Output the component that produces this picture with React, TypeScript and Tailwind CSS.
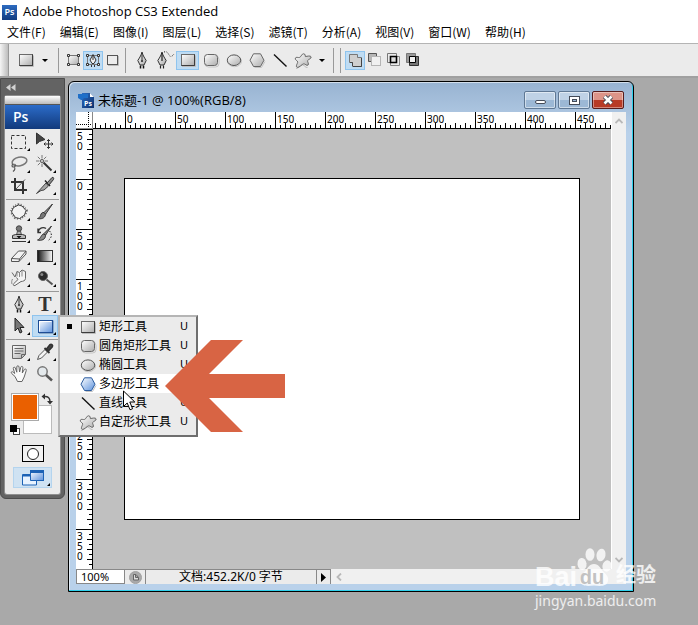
import type { ReactNode } from "react";
import { clsx } from "clsx";

const MENUS = ["文件(F)", "编辑(E)", "图像(I)", "图层(L)", "选择(S)", "滤镜(T)", "分析(A)", "视图(V)", "窗口(W)", "帮助(H)"];

const H_LABELS = ["0", "50", "100", "150", "200", "250", "300", "350", "400", "450"];
const V_LABELS = ["50", "0", "50", "100", "150", "200", "250", "300", "350"];

// Shared gradients, referenced by id from every icon below.
function Gradients() {
  return (
    <svg className="absolute h-0 w-0" aria-hidden="true">
      <defs>
        <linearGradient id="steel" x1="0" y1="0" x2="1" y2="1">
          <stop offset="0" stopColor="#ffffff" />
          <stop offset="1" stopColor="#acacac" />
        </linearGradient>
        <linearGradient id="sky" x1="0" y1="0" x2="1" y2="1">
          <stop offset="0" stopColor="#ffffff" />
          <stop offset="1" stopColor="#5d92dc" />
        </linearGradient>
        <linearGradient id="ramp" x1="0" y1="0" x2="1" y2="0">
          <stop offset="0" stopColor="#111111" />
          <stop offset="1" stopColor="#ffffff" />
        </linearGradient>
        <linearGradient id="navy" x1="0" y1="0" x2="1" y2="1">
          <stop offset="0" stopColor="#2a6cc4" />
          <stop offset="1" stopColor="#0c2f6b" />
        </linearGradient>
      </defs>
    </svg>
  );
}

function Icon({ children, className = "h-5 w-5" }: { children: ReactNode; className?: string }) {
  return (
    <svg viewBox="0 0 20 20" className={clsx("shrink-0", className)} fill="none" stroke="#333" aria-hidden="true">
      {children}
    </svg>
  );
}

const RectShape = () => (
  <Icon>
    <path d="M4 16.500h13.500v-11" stroke="#bdbdbd" />
    <rect x="3.500" y="4.500" width="13" height="11" fill="url(#steel)" stroke="#6a6a6a" />
    <path d="M3.500 15.500h13v-11" stroke="#3c3c3c" />
  </Icon>
);
const BlueRectShape = () => (
  <Icon>
    <path d="M4 17.500h14.500v-13" stroke="#8aa9c8" />
    <rect x="3.500" y="4.500" width="14" height="12" fill="url(#sky)" stroke="#1d4c94" />
    <path d="M4.500 15.500v-10h12" stroke="#fff" />
  </Icon>
);
const RoundShape = () => (
  <Icon>
    <rect x="4" y="6" width="14" height="11" rx="3.500" stroke="#c4c4c4" />
    <rect x="3.500" y="4.500" width="13" height="11" rx="3" fill="url(#steel)" stroke="#666" />
  </Icon>
);
const EllipseShape = () => (
  <Icon>
    <ellipse cx="10.500" cy="11.200" rx="7" ry="5.500" stroke="#c4c4c4" />
    <ellipse cx="10" cy="10.200" rx="6.700" ry="5.300" fill="url(#steel)" stroke="#555" />
  </Icon>
);
const HexShape = ({ blue = false }: { blue?: boolean }) => (
  <Icon>
    <path d="M7.500 17.500h7l3.500-6" stroke="#c4c4c4" />
    <path
      d="M6.500 3.800h7L17 10.200l-3.500 6.300h-7L3 10.200z"
      fill={blue ? "url(#sky)" : "url(#steel)"}
      stroke={blue ? "#2a5b9e" : "#666"}
    />
  </Icon>
);
const LineShape = () => (
  <Icon>
    <path d="M4 4.500l12.500 12" stroke="#111" strokeWidth="1.400" />
  </Icon>
);
const BlobShape = () => (
  <Icon>
    <path d="M3 18.500c2.500 0 4-3.500 6.500-3.500s2.500 3 5 2.500" stroke="#bbb" />
    <path
      d="M8.600 5.200c.8-1.700 3.200-2 3.500-.2l.3 1.600c1.800-.3 5.100-1.300 5.700.3.500 1.600-2.700 2.400-3.500 3.700-.3 1.200 1.500 3 .5 4.400-1.300 1.300-3-1.300-4.300-1.200-2 .2-4.200 4-6.600 3.600-2-.9.300-3.800.6-5.400 0-1.200-3.200-2.100-2.500-3.900.8-1.500 2.900-.2 4.300-.7 1-.4 1.400-1.300 2-2.200z"
      fill="url(#steel)"
      stroke="#666"
    />
  </Icon>
);
const PenShape = () => (
  <Icon>
    <path d="M10 2C9 6 7 8.500 5.800 10.500L8 15h4l2.200-4.500C13 8.500 11 6 10 2z" fill="url(#steel)" stroke="#333" />
    <path d="M10 3v7" stroke="#333" />
    <circle cx="10" cy="11" r="1" fill="#222" stroke="none" />
    <path d="M8.500 15.500v3M11.500 15.500v3" stroke="#111" strokeWidth="1.500" />
  </Icon>
);
const FreePenShape = () => (
  <Icon>
    <g transform="translate(-3 0)">
      <path d="M10 2C9 6 7 8.500 5.800 10.500L8 15h4l2.200-4.500C13 8.500 11 6 10 2z" fill="url(#steel)" stroke="#333" />
      <path d="M10 3v8M8.500 15.500v3M11.500 15.500v3" stroke="#222" strokeWidth="1.200" />
    </g>
    <path d="M9 2c3-1 4 1 5 3s3 2 5-1" stroke="#222" strokeDasharray="1 1.500" />
  </Icon>
);
const ShapeLayers = () => (
  <Icon>
    <path d="M5.500 5.500h10v9h-10z" fill="url(#steel)" stroke="#777" />
    <path d="M4.500 4.500h2v2h-2zM14.500 4.500h2v2h-2zM4.500 13.500h2v2h-2zM14.500 13.500h2v2h-2z" fill="#eee" stroke="#333" />
  </Icon>
);
const PathsMode = () => (
  <Icon>
    <path d="M4.500 5.500h11v9h-11z" stroke="#777" />
    <path d="M3.500 4.500h2v2h-2zM14.500 4.500h2v2h-2zM3.500 13.500h2v2h-2zM14.500 13.500h2v2h-2z" fill="#eee" stroke="#333" />
    <path d="M10 4.500l-3 5.500 2 3.500h2l2-3.500zM10 5v5M8.500 15v2M11.500 15v2" fill="#eee" stroke="#333" />
  </Icon>
);
const FillPixels = () => (
  <Icon>
    <path d="M5 15.500h10.500V6" stroke="#bbb" />
    <rect x="4.500" y="5.500" width="10" height="9" fill="#ececec" stroke="#555" />
  </Icon>
);

const CombineAdd = () => (
  <Icon>
    <path d="M4.500 4.500h8v3h4v9h-9v-4h-3z" fill="#cfcfcf" stroke="#777" />
    <path d="M8 16.500h8.500V8M5 12.500h2.500v3.500" stroke="#444" />
  </Icon>
);
const CombineSubtract = () => (
  <Icon>
    <path d="M3.500 11.500v-8h8v3h-5v5z" fill="#b5b5b5" stroke="#555" />
    <rect x="6.500" y="6.500" width="9" height="9" fill="#f0f0f0" stroke="#b5b5b5" />
  </Icon>
);
const CombineIntersect = () => (
  <Icon>
    <path d="M3.500 3.500h9v9h-9z" stroke="#777" />
    <path d="M6.500 6.500h9v9h-9z" stroke="#888" />
    <path d="M6.500 6.500h6v6h-6z" fill="#ddd" stroke="#000" strokeWidth="1.600" />
  </Icon>
);
const CombineExclude = () => (
  <Icon>
    <path d="M3.500 3.500h9v9h-9z" fill="#999" stroke="#777" />
    <path d="M6.500 6.500h9v9h-9z" fill="#777" stroke="#333" />
    <path d="M6.500 6.500h6v6h-6z" fill="#f2f2f2" stroke="#000" />
  </Icon>
);

const TOOL_ICONS: Record<string, ReactNode> = {
  选框: (
    <Icon>
      <rect x="2.500" y="3.500" width="14" height="13" stroke="#333" strokeDasharray="3 2" />
    </Icon>
  ),
  移动: (
    <Icon>
      <path d="M1.500 1v11l3-2.500 5.500-2z" fill="#444" stroke="#333" />
      <path
        d="M13.500 7.500v9M9 12h9M12 9l1.500-1.500L15 9M12 15l1.500 1.500L15 15M10.500 10.500L9 12l1.500 1.500M16.500 10.500L18 12l-1.500 1.500"
        stroke="#333"
      />
    </Icon>
  ),
  套索: (
    <Icon>
      <ellipse cx="10.500" cy="7.500" rx="7.500" ry="4.300" transform="rotate(-12 10.500 7.500)" stroke="#777" strokeWidth="1.500" />
      <path d="M4.500 10c-2 .5-2 3 0 3s2.500-2 1-3M5 13c1.500 1 1 3-1 4.500" stroke="#555" strokeWidth="1.200" />
    </Icon>
  ),
  魔棒: (
    <Icon>
      <path d="M8.500 8.500l8 8" stroke="#333" strokeWidth="2" />
      <path d="M7 1v3.500M7 9.500V13M1 7h3.500M2.800 2.800l2.500 2.500M11.200 2.800L8.700 5.300M2.800 11.200l2.500-2.500M9.500 7H13" stroke="#777" />
      <circle cx="7" cy="7" r="1.500" fill="#eee" stroke="#555" />
    </Icon>
  ),
  裁剪: (
    <Icon>
      <path d="M6 2v12h12M2 6h12v12" stroke="#333" strokeWidth="2" />
      <path d="M7 13l9-9.500" stroke="#555" />
    </Icon>
  ),
  切片: (
    <Icon>
      <path d="M1.500 17.500L11 7l2.500 3L9 14l-3 .5z" fill="#a5a5a5" stroke="#444" />
      <path d="M10 4.500l5 5.500" stroke="#222" strokeWidth="1.500" />
      <path d="M12 7l5-5.500c1.500-.5 2 .5 1.500 2L14 9z" fill="#888" stroke="#333" />
    </Icon>
  ),
  修补: (
    <Icon>
      <path
        d="M4.500 5.500l5-2.500 3.500 1 4 4.500-1.500 4.500-5 3.500-4-1L2.500 10z"
        stroke="#666"
        strokeWidth="3.500"
        strokeDasharray="1 1.500"
      />
      <path d="M4.500 5.500l5-2.500 3.500 1 4 4.500-1.500 4.500-5 3.500-4-1L2.500 10z" fill="#f3f3f3" stroke="#444" />
    </Icon>
  ),
  画笔: (
    <Icon>
      <path d="M17.500 2L9 10.500l1.500 1.800z" fill="#999" stroke="#333" />
      <path d="M9 10.500c-2-.5-3 1-3.500 3-.4 1.500-1.500 2.500-3 3 3.500.8 7.500 0 8-4.200z" fill="#777" stroke="#333" />
    </Icon>
  ),
  图章: (
    <Icon>
      <path d="M8.500 7l-1 4h5l-1-4z" fill="#aaa" stroke="#555" />
      <circle cx="10" cy="4.500" r="2.700" fill="#777" stroke="#444" />
      <path d="M3.500 14.500v-3l3-1h7l3 1v3z" fill="#bbb" stroke="#333" />
      <path d="M3 17.500h14" stroke="#333" />
      <path d="M7.500 12h5L10 14.500z" fill="#111" stroke="none" />
    </Icon>
  ),
  历史记录画笔: (
    <Icon>
      <path d="M16.500 2L9 9.500l1.500 1.800zM9 10c-3 0-3 5-6.500 6 4 1 8-.5 8-4.500z" fill="#888" stroke="#333" />
      <path d="M3 8c1-5 6-5 8-3.500M3 4.500v4h3" stroke="#333" strokeWidth="1.400" />
      <path d="M14.500 7c3 3 2.500 7-2 10" stroke="#222" strokeDasharray="1.500 1.500" />
    </Icon>
  ),
  橡皮擦: (
    <Icon>
      <path d="M2.500 12.500L9.500 5h7.500l-6.500 8zM2.500 12.500v3h7.500l.5-2.500M10 15.500L17 8V5" fill="#f2f2f2" stroke="#555" />
    </Icon>
  ),
  渐变: (
    <Icon>
      <rect x="2.500" y="4.500" width="15" height="11" fill="url(#ramp)" stroke="#333" />
    </Icon>
  ),
  涂抹: (
    <Icon>
      <path
        d="M3 4.500l3 4.500 2-5.500 2.500 1L13 2l3.500 1.500v7c0 2-2.500 3-4.500 3l-6 4c-1.500.6-2.300-.8-1.300-1.800L9 11.500 7.500 9.500"
        fill="#f4f4f4"
        stroke="#666"
      />
      <path d="M8 3.500v5M10.500 4.500v4.500M13 3v5.500" stroke="#888" />
      <path d="M3.500 11c-1 2-1 3.500-.5 5" stroke="#888" />
    </Icon>
  ),
  加深: (
    <Icon>
      <circle cx="8" cy="8" r="4.500" fill="#2b2b2b" stroke="#666" />
      <circle cx="6.800" cy="6.500" r="1.500" fill="#888" stroke="none" />
      <path d="M11.500 11.500l6 5" stroke="#555" strokeWidth="2" />
    </Icon>
  ),
  钢笔: <PenShape />,
  路径选择: (
    <Icon>
      <path d="M6 2v13l3-3 2 5 2-1-2-4.500h4z" fill="#777" stroke="#222" />
    </Icon>
  ),
  矩形: <BlueRectShape />,
  注释: (
    <Icon>
      <path d="M3.500 3.500h13v9l-4 4h-9z" fill="url(#steel)" stroke="#666" />
      <path d="M5.500 6.500h9M5.500 9h9M5.500 11.500h6M12.500 16v-3.500h4" stroke="#666" />
    </Icon>
  ),
  吸管: (
    <Icon>
      <path d="M2.500 17.500l1.500-4 6-6 2.500 2.500-6 6z" fill="#f4f4f4" stroke="#555" />
      <path d="M9.500 6l5 5" stroke="#333" strokeWidth="1.800" />
      <path d="M11.500 7l3.500-4.500c1.500-1 3.500.8 2.200 2.500L13.500 9z" fill="#444" stroke="#333" strokeWidth="1.500" />
    </Icon>
  ),
  抓手: (
    <Icon>
      <path
        d="M6 12.500L2.700 9.500C1.500 8 3 7 4.300 8.300l1.400 1.200L4.300 4.500C4 3 5.800 2.500 6.300 4L7.800 8.200 7.800 3c0-1.700 2.100-1.700 2.200 0L10.600 8l1.200-4.800c.4-1.400 2.300-.9 2.100.5L13.300 9l2-3.500c.9-1.200 2.500-.3 1.900 1.200L15.200 13 13 17.500H8.500z"
        fill="#fafafa"
        stroke="#666"
      />
    </Icon>
  ),
  缩放: (
    <Icon>
      <circle cx="7.500" cy="7.500" r="4.700" fill="#e4e9ec" stroke="#777" strokeWidth="1.500" />
      <path d="M11 11l6 5.500" stroke="#555" strokeWidth="2.500" />
    </Icon>
  ),
};

const TOOL_GROUPS = [
  ["选框", "移动", "套索", "魔棒", "裁剪", "切片"],
  ["修补", "画笔", "图章", "历史记录画笔", "橡皮擦", "渐变", "涂抹", "加深"],
  ["钢笔", "文字", "路径选择", "矩形"],
  ["注释", "吸管", "抓手", "缩放"],
];

const NO_FLYOUT = ["移动", "抓手", "缩放", "裁剪"];

const SHAPE_TOOLS = [
  { name: "矩形工具", icon: <RectShape />, current: true },
  { name: "圆角矩形工具", icon: <RoundShape /> },
  { name: "椭圆工具", icon: <EllipseShape /> },
  { name: "多边形工具", icon: <HexShape blue />, hover: true },
  { name: "直线工具", icon: <LineShape /> },
  { name: "自定形状工具", icon: <BlobShape /> },
];

function OptionButton({
  label,
  active,
  className,
  children,
}: {
  label: string;
  active?: boolean;
  className: string;
  children: ReactNode;
}) {
  return (
    <button
      aria-label={label}
      className={clsx(
        "flex h-[19px] shrink-0 items-center justify-center border",
        active ? "border-[#8fc4ee] bg-[#bfdcf3]" : "border-transparent",
        className,
      )}
    >
      {children}
    </button>
  );
}

function DropArrow() {
  return (
    <svg viewBox="0 0 6 3" className="h-[3px] w-[6px]" aria-hidden="true">
      <path d="M0 0h6L3 3z" fill="#000" />
    </svg>
  );
}

function Divider() {
  return <div className="h-[25px] w-px shrink-0 bg-[#999]" />;
}

function OptionsBar() {
  return (
    <div className="flex h-[35px] items-center border-t border-b-2 border-t-[#b4b4b4] border-b-[#a0a0a0] bg-[#ebebeb]">
      <div className="h-full w-[9px] shrink-0 border-r border-[#999] bg-linear-to-r from-[#f5f5f5] to-[#bdbdbd]" />
      <OptionButton label="当前工具" className="ml-[7px] w-5">
        <RectShape />
      </OptionButton>
      <button aria-label="工具预设" className="flex h-5 w-[18px] items-center justify-center">
        <DropArrow />
      </button>
      <div className="px-1">
        <Divider />
      </div>
      <OptionButton label="形状图层" className="w-5">
        <ShapeLayers />
      </OptionButton>
      <OptionButton label="路径" active className="w-5">
        <PathsMode />
      </OptionButton>
      <OptionButton label="填充像素" className="w-5">
        <FillPixels />
      </OptionButton>
      <div className="pr-1 pl-[2px]">
        <Divider />
      </div>
      <OptionButton label="钢笔" className="w-[23px]">
        <PenShape />
      </OptionButton>
      <OptionButton label="自由钢笔" className="w-[23px]">
        <FreePenShape />
      </OptionButton>
      <OptionButton label="矩形" active className="w-[23px]">
        <RectShape />
      </OptionButton>
      <OptionButton label="圆角矩形" className="w-[23px]">
        <RoundShape />
      </OptionButton>
      <OptionButton label="椭圆" className="w-[23px]">
        <EllipseShape />
      </OptionButton>
      <OptionButton label="多边形" className="w-[23px]">
        <HexShape />
      </OptionButton>
      <OptionButton label="直线" className="w-[23px]">
        <LineShape />
      </OptionButton>
      <OptionButton label="自定形状" className="w-[23px]">
        <BlobShape />
      </OptionButton>
      <button aria-label="几何选项" className="flex h-5 w-4 items-center justify-center">
        <DropArrow />
      </button>
      <div className="flex gap-[6px] pr-1 pl-[3px]">
        <Divider />
        <Divider />
      </div>
      <OptionButton label="添加到路径区域" active className="w-5">
        <CombineAdd />
      </OptionButton>
      <OptionButton label="从路径区域减去" className="w-[19px]">
        <CombineSubtract />
      </OptionButton>
      <OptionButton label="交叉路径区域" className="w-[19px]">
        <CombineIntersect />
      </OptionButton>
      <OptionButton label="重叠路径区域除外" className="w-[19px]">
        <CombineExclude />
      </OptionButton>
    </div>
  );
}

function ShapeFlyout() {
  return (
    <ul className="absolute top-0 left-[26px] z-20 w-[140px] border-2 border-t-[#b5b5b5] border-r-[#6e6e6e] border-b-[#6e6e6e] border-l-[#b5b5b5] bg-[#ebebeb] pb-1">
      {SHAPE_TOOLS.map((tool) => (
        <li key={tool.name}>
          <button
            className={clsx("flex h-[19px] w-full items-center text-left text-xs text-black", tool.hover && "bg-white")}
          >
            <span className="flex w-[18px] justify-center">
              {tool.current && <span className="h-[5px] w-[5px] bg-black" />}
            </span>
            {tool.icon}
            <span className="ml-px whitespace-nowrap">{tool.name}</span>
            <span className="mr-2 ml-auto text-[11px]">{tool.hover ? "" : "U"}</span>
          </button>
        </li>
      ))}
    </ul>
  );
}

function Tool({ name }: { name: string }) {
  const selected = name === "矩形";
  return (
    <div className="relative">
      <button
        aria-label={name + "工具"}
        className={clsx(
          "relative flex h-[22px] w-full items-center justify-center border",
          selected ? "border-[#8fc4ee] bg-[#bfdcf3]" : "border-transparent",
        )}
      >
        {name === "文字" ? (
          <span className="font-['Liberation_Serif',serif] text-xl leading-5 font-bold text-[#333]">T</span>
        ) : (
          TOOL_ICONS[name]
        )}
        {!NO_FLYOUT.includes(name) && (
          <svg viewBox="0 0 3 3" className="absolute right-px bottom-px h-[3px] w-[3px]" aria-hidden="true">
            <path d="M3 0v3H0z" fill="#000" />
          </svg>
        )}
      </button>
      {selected && <ShapeFlyout />}
    </div>
  );
}

function Toolbox() {
  return (
    <aside className="relative z-10 h-[421px] w-[65px] shrink-0 rounded-b-md border border-[#4c4c4c] bg-[#636363] px-1">
      <button aria-label="折叠" className="flex h-[17px] items-center pl-px">
        <svg viewBox="0 0 10 7" className="h-[7px] w-[10px]" aria-hidden="true">
          <path d="M4.500 0v7L0 3.500zM9.500 0v7L5 3.500z" fill="#d2d2d2" />
        </svg>
      </button>
      <div className="rounded-xs bg-[#ebebeb] pb-[6px] ring-1 ring-[#8f8f8f]">
        <div className="h-[9px] border-b border-[#555] bg-linear-to-b from-white to-[#bcbcbc]" />
        <div className="flex h-6 items-center bg-linear-to-b from-[#2c6cc9] to-[#123a7c] pl-2 font-['Open_Sans',sans-serif] text-sm font-semibold text-white">
          Ps
        </div>
        <div className="px-px pt-[2px]">
          {TOOL_GROUPS.map((group, i) => (
            <div key={i}>
              {i > 0 && (
                <div className="flex h-1 items-center">
                  <div className="h-px w-full bg-[#999]" />
                </div>
              )}
              <div className="grid w-[52px] grid-cols-2">
                {group.map((name) => (
                  <Tool key={name} name={name} />
                ))}
              </div>
            </div>
          ))}
        </div>

        {/* foreground / background colours */}
        <div className="relative mt-2 h-[43px]">
          <button aria-label="背景色" className="absolute top-3 left-[18px] h-[29px] w-[29px] border border-[#bbb] bg-white" />
          <button
            aria-label="前景色"
            className="absolute top-0 left-[6px] h-[28px] w-[28px] border border-[#aaa] bg-[#ea6000] ring-1 ring-white ring-inset"
          />
          <button aria-label="切换颜色" className="absolute top-0 left-9">
            <svg viewBox="0 0 12 12" className="h-3 w-3" fill="none" stroke="#333" aria-hidden="true">
              <path d="M3 3.500c4-.5 6 1.500 6 5" strokeWidth="1.500" />
              <path d="M0.500 3.500L4 .5v6zM9 11.500L6 8h6z" fill="#333" stroke="none" />
            </svg>
          </button>
          <button aria-label="默认颜色" className="absolute top-8 left-[5px]">
            <svg viewBox="0 0 10 10" className="h-[10px] w-[10px]" aria-hidden="true">
              <rect x="3.500" y="3.500" width="6" height="6" fill="#fff" stroke="#444" />
              <rect x="0" y="0" width="7" height="7" fill="#000" />
            </svg>
          </button>
        </div>

        <div className="flex flex-col items-center gap-[5px] pt-[9px]">
          <button aria-label="快速蒙版" className="flex h-[17px] w-[22px] items-center justify-center border border-black bg-[#f2f2f2]">
            <span className="h-3 w-3 rounded-full border border-[#222] bg-white" />
          </button>
          <button
            aria-label="屏幕模式"
            className="relative flex h-[21px] w-[39px] items-center justify-center border border-[#b4d4ee] bg-[#cfe2f2]"
          >
            <svg viewBox="0 0 22 17" className="h-[17px] w-[22px]" aria-hidden="true">
              <rect x="8.500" y="1.500" width="13" height="10" fill="url(#sky)" stroke="#1c62b5" />
              <path d="M9 3h12" stroke="#1c62b5" strokeWidth="2" />
              <path d="M0.500 5.500h8v6h6v4.500H0.500z" fill="#e8f3ff" stroke="#1c62b5" />
              <path d="M1 6.500h7" stroke="#1c62b5" strokeWidth="2" />
            </svg>
            <svg viewBox="0 0 3 3" className="absolute right-px bottom-px h-[3px] w-[3px]" aria-hidden="true">
              <path d="M3 0v3H0z" fill="#000" />
            </svg>
          </button>
        </div>
      </div>
    </aside>
  );
}

// Tick marks: full height every 50 units, longer on tens than on fives.
function tickLength(offset: number): number {
  if (offset % 50 === 0) return 17;
  return offset % 10 === 0 ? 5 : 3;
}

function HorizontalRuler() {
  const ticks = Array.from({ length: 104 }, (_, i) => i * 5 - 30);
  return (
    <div className="relative h-[17px] min-w-0 flex-1 overflow-hidden border-b border-black bg-white">
      <svg className="absolute inset-0 h-full w-full" aria-hidden="true" shapeRendering="crispEdges">
        {ticks.map((t) => (
          <rect key={t} x={t + 32} y={16 - tickLength(t)} width="1" height={tickLength(t)} fill="#000" />
        ))}
      </svg>
      <div className="flex pl-[34px]">
        {H_LABELS.map((label) => (
          <span key={label} className="relative w-[50px] shrink-0 text-[10px] leading-[14px]">
            {label}
          </span>
        ))}
      </div>
    </div>
  );
}

function VerticalRuler() {
  const ticks = Array.from({ length: 88 }, (_, i) => i * 5);
  return (
    <div className="relative w-[17px] shrink-0 overflow-hidden border-r border-black bg-white">
      <svg className="absolute inset-0 h-full w-full" aria-hidden="true" shapeRendering="crispEdges">
        {ticks.map((t) => (
          <rect key={t} x={16 - tickLength(t)} y={t} width={tickLength(t)} height="1" fill="#000" />
        ))}
      </svg>
      {V_LABELS.map((label, i) => (
        <div key={i} className="relative h-[50px] pt-[2px] pl-px">
          <div className="w-[6px] text-[10px] leading-[10px] break-all">{label}</div>
        </div>
      ))}
    </div>
  );
}

function WindowButtons() {
  const frame = "flex h-[18px] w-8 items-center justify-center rounded-xs border ring-1 ring-inset";
  return (
    <div className="flex gap-[2px]">
      <button
        aria-label="最小化"
        className={clsx(frame, "border-[#5f7894] bg-linear-to-b from-[#bfd2e6] from-50% to-[#9cb8d5] to-50% ring-white/50")}
      >
        <span className="mt-1 h-1 w-[11px] rounded-xs border border-[#444b58] bg-white" />
      </button>
      <button
        aria-label="最大化"
        className={clsx(frame, "border-[#5f7894] bg-linear-to-b from-[#bfd2e6] from-50% to-[#9cb8d5] to-50% ring-white/50")}
      >
        <span className="flex h-[9px] w-[11px] items-center justify-center border border-[#444b58] bg-white">
          <span className="h-[3px] w-[5px] border border-[#444b58] bg-[#9cb8d5]" />
        </span>
      </button>
      <button
        aria-label="关闭"
        className={clsx(frame, "border-[#571c1c] bg-linear-to-b from-[#dd9488] from-50% to-[#b83a26] to-50% ring-white/40")}
      >
        <svg viewBox="0 0 12 10" className="h-[10px] w-3" aria-hidden="true">
          <path d="M2.500 1.500l7 7M9.500 1.500l-7 7" stroke="#444b58" strokeWidth="4.500" />
          <path d="M2.500 1.500l7 7M9.500 1.500l-7 7" stroke="#fff" strokeWidth="2.600" />
        </svg>
      </button>
    </div>
  );
}

function Chevron({ d }: { d: string }) {
  return (
    <svg viewBox="0 0 8 8" className="h-2 w-2" fill="none" stroke="#b8b8b8" strokeWidth="1.800" aria-hidden="true">
      <path d={d} />
    </svg>
  );
}

function StatusBar() {
  return (
    <div className="flex h-[15px] bg-[#f0f0f0] text-xs">
      <input
        aria-label="缩放比例"
        defaultValue="100%"
        className="h-full w-12 border border-r-0 border-[#888] bg-white pl-1 text-[11px] leading-3 outline-none"
      />
      <button aria-label="版本" className="flex w-[22px] items-center justify-center border-x border-t border-[#888] bg-[#ebebeb]">
        <svg viewBox="0 0 13 13" className="h-[13px] w-[13px]" fill="none" stroke="#666" aria-hidden="true">
          <circle cx="6.500" cy="6.500" r="6" fill="#a9a9a9" stroke="#a0a0a0" />
          <path d="M4.500 3.500h2.500l2.500 3v2.500h-5zM6.500 3.500v3h3" fill="#ddd" />
        </svg>
      </button>
      <div className="flex w-[170px] items-center justify-center border-t border-[#888] bg-[#ebebeb] whitespace-nowrap">
        文档:452.2K/0 字节
      </div>
      <button aria-label="状态栏菜单" className="flex w-[15px] items-center justify-center border-x border-t border-[#888] bg-[#ebebeb]">
        <svg viewBox="0 0 5 9" className="h-[9px] w-[5px]" aria-hidden="true">
          <path d="M0 0v9l5-4.500z" fill="#000" />
        </svg>
      </button>
      <button aria-label="向左滚动" className="flex w-4 items-center justify-center">
        <Chevron d="M6 0.500L2.500 4 6 7.500" />
      </button>
    </div>
  );
}

function DocumentWindow() {
  return (
    <section className="mt-[3px] mr-16 mb-[33px] ml-[3px] flex min-w-0 flex-1 flex-col rounded-t-md border border-black bg-linear-to-b from-[#98b3d1] via-[#b9d1ea] via-10% to-[#b9d1ea] px-[7px] pb-[7px] shadow-[inset_-1px_-1px_0_#2fd0ec,inset_1px_1px_0_#ffffff90]">
      <header className="flex h-[30px] items-center justify-between">
        <h1 className="flex items-center gap-1 pt-[6px] pl-[2px] font-['Open_Sans','Noto_Sans_CJK_SC',sans-serif] text-[13px] leading-4 whitespace-nowrap">
          <svg viewBox="0 0 16 16" className="h-4 w-4" aria-hidden="true">
            <path d="M4 1h8l4 4v11H4z" fill="url(#navy)" />
            <path d="M12 1v4h4z" fill="#fff" />
            <path d="M0 2h10v4H6L4 8H3L0 6z" fill="#1f6fc8" />
            <text x="6" y="14" fontSize="7" fontWeight="bold" fill="#fff" fontFamily="Open Sans, sans-serif">
              Ps
            </text>
          </svg>
          未标题-1 @ 100%(RGB/8)
        </h1>
        <div className="pt-[6px] pr-[2px]">
          <WindowButtons />
        </div>
      </header>

      <div className="flex min-h-0 flex-1">
        <div className="flex min-w-0 flex-1 flex-col">
          <div className="flex shrink-0">
            <svg viewBox="0 0 17 17" className="h-[17px] w-[17px] bg-white" fill="none" stroke="#000" aria-hidden="true">
              <path d="M12.500 0v17M0 12.500h17" strokeDasharray="1 1" />
              <path d="M16.500 0v16.500H0" stroke="#888" />
            </svg>
            <HorizontalRuler />
          </div>
          <div className="flex min-h-0 flex-1">
            <VerticalRuler />
            <div className="min-w-0 flex-1 overflow-hidden bg-[#c0c0c0] pt-[49px] pl-[31px]">
              <div className="h-[342px] w-[456px] border border-black bg-white" />
            </div>
          </div>
        </div>
        <div className="flex w-[15px] flex-col items-center justify-between border-l border-white bg-[#f0f0f0] py-[5px]">
          <button aria-label="向上滚动">
            <Chevron d="M0.500 6L4 2.500 7.500 6" />
          </button>
          <button aria-label="向下滚动">
            <Chevron d="M0.500 2L4 5.500 7.500 2" />
          </button>
        </div>
      </div>
      <StatusBar />
    </section>
  );
}

function PointerArrow() {
  return (
    <svg viewBox="0 0 120 92" className="pointer-events-none absolute top-[340px] left-[165px] z-30 h-[92px] w-[120px]" aria-hidden="true">
      <path d="M0 46L46 0h32L44 34h76v24H44l34 34H46z" fill="#d86444" />
    </svg>
  );
}

function Cursor() {
  return (
    <svg viewBox="0 0 14 21" className="pointer-events-none absolute top-[390px] left-[123px] z-30 h-[21px] w-[14px]" aria-hidden="true">
      <path d="M.5 1v15.500l3.700-3.500 2.800 6.800 2.600-1.100L6.800 12h5z" fill="#fff" stroke="#000" />
    </svg>
  );
}

function Watermark() {
  return (
    <div className="pointer-events-none absolute right-[38px] bottom-[14px] z-30 w-[125px] text-white/80">
      <div className="flex h-7 items-start">
        <span className="w-[39px] font-['Liberation_Sans',sans-serif] text-[27px] leading-7 font-bold">Bai</span>
        <span className="relative flex h-6 w-9 items-end justify-center">
          <svg viewBox="0 0 38 40" className="absolute bottom-0 left-0 h-10 w-[38px]" fill="currentColor" aria-hidden="true">
            <ellipse cx="8" cy="17" rx="4.500" ry="6" transform="rotate(-8 8 17)" />
            <ellipse cx="16" cy="7.500" rx="4.500" ry="6.300" />
            <ellipse cx="27" cy="8" rx="4.500" ry="6.300" transform="rotate(12 27 8)" />
            <ellipse cx="33" cy="19" rx="4.500" ry="5.700" transform="rotate(12 33 19)" />
            <path d="M20 17c5 0 6 4 9 7.500 3 3 6 5 5 9.500-1 5-6 5.500-14 4.500-8 1-13 .5-14-4.500-.8-4.500 2-6.500 5-9.500 3-3.500 4-7.500 9-7.500z" />
          </svg>
          <span className="relative font-['Liberation_Sans',sans-serif] text-xl leading-5 font-bold text-[#c2c2c2]">du</span>
        </span>
        <span className="ml-[6px] text-[20px] leading-6 font-bold whitespace-nowrap">经验</span>
      </div>
      <div className="font-['Noto_Sans',sans-serif] text-sm leading-5">jingyan.baidu.com</div>
    </div>
  );
}

export default function App() {
  return (
    <div className="relative flex h-screen min-h-[600px] flex-col overflow-hidden bg-[#a9a9a9] font-['Noto_Sans','Noto_Sans_CJK_SC',sans-serif] text-black">
      <Gradients />
      <div className="flex h-6 shrink-0 items-center gap-[6px] bg-white pl-[2px] font-['Open_Sans',sans-serif] text-[13px]">
        <span className="flex h-[15px] w-[15px] items-center justify-center bg-linear-to-b from-[#2d6bc0] to-[#123c80] text-[9px] leading-3 font-semibold text-white">
          Ps
        </span>
        Adobe Photoshop CS3 Extended
      </div>
      <nav className="flex h-[19px] shrink-0 items-start gap-[14px] bg-white pl-[7px] font-['Noto_Sans_CJK_SC',sans-serif] text-xs">
        {MENUS.map((menu) => (
          <button key={menu} className="leading-4 whitespace-nowrap">
            {menu}
          </button>
        ))}
      </nav>
      <OptionsBar />
      <main className="flex min-h-0 flex-1 items-stretch">
        <div className="shrink-0">
          <Toolbox />
        </div>
        <DocumentWindow />
      </main>
      <PointerArrow />
      <Cursor />
      <Watermark />
    </div>
  );
}
